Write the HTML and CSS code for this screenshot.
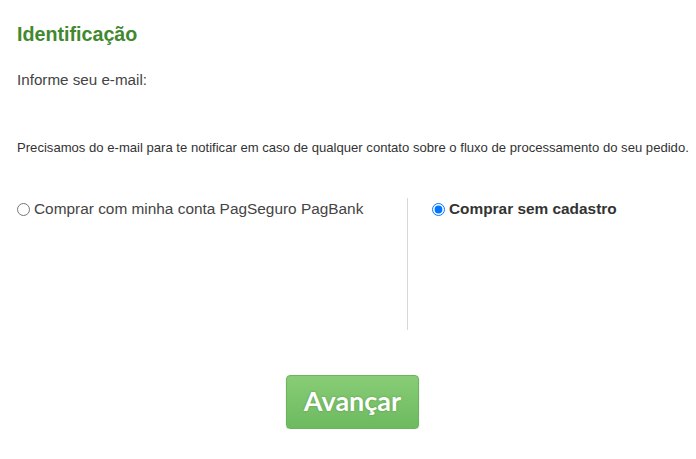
FILE: index.html
```html
<!DOCTYPE html>
<html lang="pt-BR">
<head>
<meta charset="utf-8">
<title>Identificação</title>
<link rel="stylesheet" href="styles.css">
</head>
<body>
<div class="page">
  <h1 class="title">Identificação</h1>
  <p class="label">Informe seu e-mail:</p>
  <p class="note">Precisamos do e-mail para te notificar em caso de qualquer contato sobre o fluxo de processamento do seu pedido.</p>
  <div class="options">
    <div class="col col-left">
      <label class="opt"><input type="radio" name="modo"> Comprar com minha conta PagSeguro PagBank</label>
    </div>
    <div class="col col-right">
      <label class="opt opt-bold"><input type="radio" name="modo" checked> Comprar sem cadastro</label>
    </div>
  </div>
  <div class="actions">
    <button class="btn" type="button">Avançar</button>
  </div>
</div>
</body>
</html>
```
FILE: styles.css
```css
html, body { margin: 0; padding: 0; background: #fff; }
body { font-family: "Liberation Sans", Arial, sans-serif; color: #444; }
.page { padding: 0 8px 0 17px; }
.title {
  margin: 0;
  padding-top: 23px;
  font-size: 19.7px;
  line-height: 22px;
  font-weight: bold;
  color: #42882f;
}
.label {
  margin: 26px 0 0;
  font-size: 15.2px;
  line-height: 18px;
  color: #444;
}
.note {
  margin: 51px 0 0;
  font-size: 13.1px;
  line-height: 15px;
  color: #333;
  white-space: nowrap;
}
.options {
  display: flex;
  margin-top: 43px;
  height: 132px;
}
.col { box-sizing: border-box; }
.col-left {
  width: 391px;
  border-right: 1px solid #d8d8d8;
  padding-top: 2px;
}
.col-right { padding-left: 24px; padding-top: 2px; }
.opt {
  display: flex;
  align-items: center;
  font-size: 15.4px;
  line-height: 18px;
  color: #444;
}
.opt input {
  margin: 0 4px 0 0;
  width: 13px;
  height: 13px;
}
.opt-bold { font-weight: bold; color: #333; }
.actions {
  display: flex;
  justify-content: center;
  margin-top: 45px;
}
.btn {
  width: 133px;
  height: 54px;
  border: 1px solid #6bb35c;
  border-radius: 4px;
  background: linear-gradient(#88cd76, #6dba5f);
  color: #fff;
  font-family: Lato, "Open Sans", sans-serif;
  font-weight: bold;
  font-size: 27px;
  text-shadow: 0 0 2px rgba(60, 110, 40, 0.6);
  box-shadow: 0 1px 2px rgba(0,0,0,0.15);
  cursor: pointer;
  padding: 0 0 3px;
}
```
